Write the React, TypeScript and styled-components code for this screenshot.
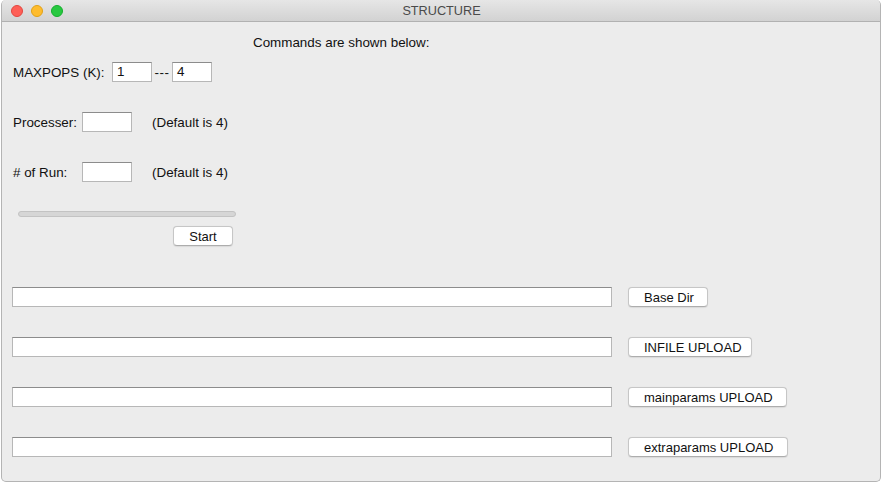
import React from "react";
import styled, { createGlobalStyle } from "styled-components";

const Global = createGlobalStyle`
  html, body { margin: 0; padding: 0; background: #ffffff; }
  body { font-family: "Liberation Sans", Arial, sans-serif; font-size: 13.4px; color: #111111; }
  * { box-sizing: border-box; }
`;

const Window = styled.div`
  margin-left: 1px;
  width: 880px;
  height: 482px;
  background: #ececec;
  border: 1px solid #b4b4b4;
  border-top: none;
  border-radius: 5px;
  overflow: hidden;
  display: flex;
  flex-direction: column;
`;

const TitleBar = styled.div`
  height: 22px;
  flex: none;
  background: linear-gradient(#e6e6e6, #d2d2d2);
  border-bottom: 1px solid #b1b1b1;
  display: grid;
  grid-template-columns: 1fr auto 1fr;
  align-items: center;
  padding: 0 0 0 9px;
`;

const Lights = styled.div`
  display: flex;
  gap: 8px;
`;

const Light = styled.span<{ $fill: string; $ring: string }>`
  width: 12px;
  height: 12px;
  border-radius: 50%;
  background: ${(p) => p.$fill};
  border: 1px solid ${(p) => p.$ring};
`;

const Title = styled.div`
  font-size: 12.7px;
  color: #4a4a4a;
  transform: translateX(-4px);
`;

const Content = styled.div`
  flex: 1;
  display: flex;
  flex-direction: column;
  padding: 11px 0 0 10px;
`;

const Header = styled.div`
  height: 20px;
  line-height: 20px;
  padding-left: 241px;
`;

const Row = styled.div<{ $top: number }>`
  display: flex;
  align-items: center;
  height: 20px;
  margin-top: ${(p) => p.$top}px;
`;

const Label = styled.span<{ $w: number }>`
  width: ${(p) => p.$w}px;
  flex: none;
  padding-left: 1px;
`;

const Entry = styled.div<{ $w: number }>`
  width: ${(p) => p.$w}px;
  height: 20px;
  flex: none;
  background: #ffffff;
  border: 1px solid #b7b7b7;
  border-top-color: #8c8c8c;
  padding-left: 4px;
  line-height: 18px;
  font-size: 13.4px;
`;

const Dash = styled.span`
  width: 20px;
  text-align: center;
  letter-spacing: 0.5px;
`;

const Hint = styled.span`
  margin-left: 20px;
`;

const Progress = styled.div`
  margin: 29px 0 0 6px;
  width: 218px;
  height: 6px;
  border-radius: 3px;
  background: #d6d6d6;
  border: 1px solid #c3c3c3;
`;

const Button = styled.div<{ $w: number }>`
  width: ${(p) => p.$w}px;
  height: 20px;
  flex: none;
  background: #ffffff;
  border: 1px solid #c6c6c6;
  border-bottom-color: #adadad;
  border-radius: 4px;
  box-shadow: 0 0.5px 1px rgba(0, 0, 0, 0.08);
  display: flex;
  align-items: center;
  justify-content: center;
  font-size: 13px;
`;

const StartRow = styled.div`
  margin: 9px 0 0 161px;
  display: flex;
`;

const Files = styled.div`
  margin-top: 41px;
  display: flex;
  flex-direction: column;
  gap: 30px;
`;

const FileRow = styled.div`
  display: flex;
  align-items: center;
  gap: 16px;
  height: 20px;
`;

const FileButton = styled(Button)`
  justify-content: flex-start;
  padding-left: 15px;
`;

const files = [
  { label: "Base Dir", w: 80 },
  { label: "INFILE UPLOAD", w: 124 },
  { label: "mainparams UPLOAD", w: 159 },
  { label: "extraparams UPLOAD", w: 160 },
];

export default function App() {
  return (
    <>
      <Global />
      <Window>
        <TitleBar>
          <Lights>
            <Light $fill="#fe5f57" $ring="#e2463f" />
            <Light $fill="#febc2e" $ring="#e1a116" />
            <Light $fill="#28c840" $ring="#14ae2c" />
          </Lights>
          <Title>STRUCTURE</Title>
          <span />
        </TitleBar>
        <Content>
          <Header>Commands are shown below:</Header>
          <Row $top={9}>
            <Label $w={100}>MAXPOPS (K):</Label>
            <Entry $w={40}>1</Entry>
            <Dash>---</Dash>
            <Entry $w={40}>4</Entry>
          </Row>
          <Row $top={30}>
            <Label $w={70}>Processer:</Label>
            <Entry $w={50} />
            <Hint>(Default is 4)</Hint>
          </Row>
          <Row $top={30}>
            <Label $w={70}># of Run:</Label>
            <Entry $w={50} />
            <Hint>(Default is 4)</Hint>
          </Row>
          <Progress />
          <StartRow>
            <Button $w={60}>Start</Button>
          </StartRow>
          <Files>
            {files.map((f) => (
              <FileRow key={f.label}>
                <Entry $w={600} />
                <FileButton $w={f.w}>{f.label}</FileButton>
              </FileRow>
            ))}
          </Files>
        </Content>
      </Window>
    </>
  );
}
